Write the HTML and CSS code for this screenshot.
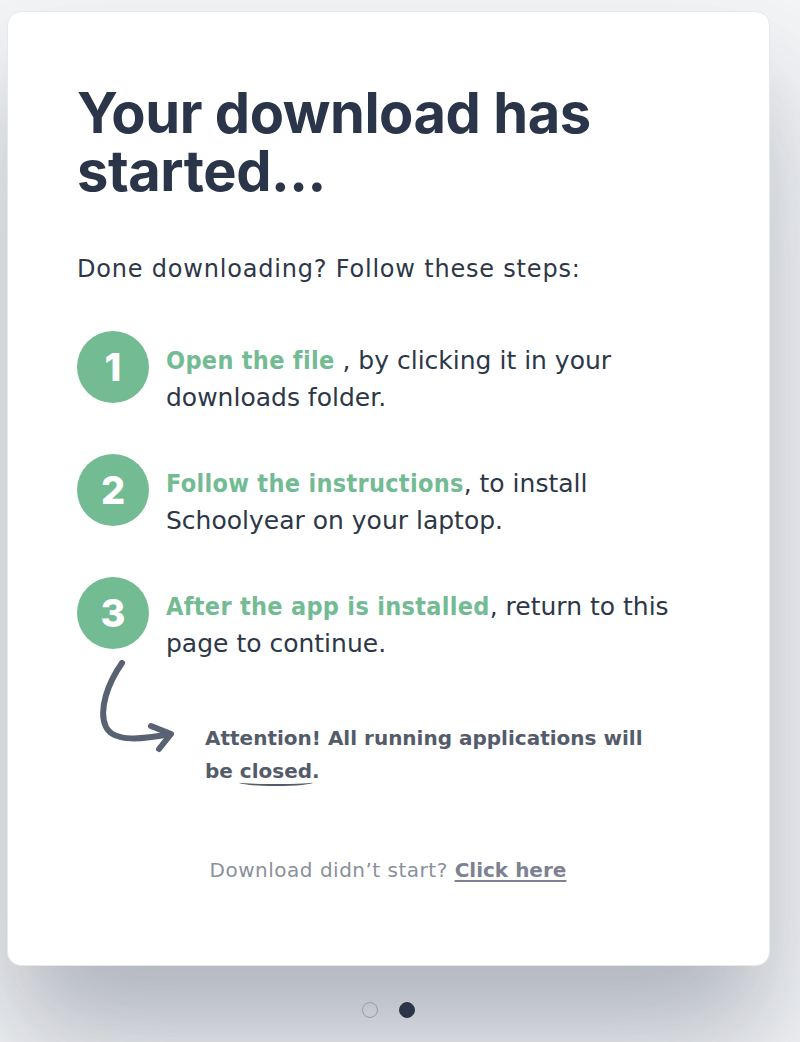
FILE: index.html
```html
<!DOCTYPE html>
<html lang="en">
<head>
<meta charset="utf-8">
<title>Your download has started</title>
<link rel="stylesheet" href="styles.css">
</head>
<body>
<div class="page">
  <main class="card">
    <h1 class="title">Your download has started...</h1>
    <p class="intro">Done downloading? Follow these steps:</p>
    <ol class="steps">
      <li class="step">
        <span class="num">1</span>
        <p class="step-text"><strong class="hl">Open the file</strong> , by clicking it in your downloads folder.</p>
      </li>
      <li class="step">
        <span class="num">2</span>
        <p class="step-text"><strong class="hl">Follow the instructions</strong>, to install Schoolyear on your laptop.</p>
      </li>
      <li class="step">
        <span class="num">3</span>
        <p class="step-text"><strong class="hl">After the app is installed</strong>, return to this page to continue.</p>
      </li>
    </ol>
    <div class="attention">
      <svg class="arrow" width="85" height="95" viewBox="0 0 85 95" aria-hidden="true">
        <path d="M28 3 C 14 23, 4 50, 12 67 C 20 83, 50 79, 76 74" fill="none" stroke="#596273" stroke-width="6" stroke-linecap="round"/>
        <path d="M57 66 L77 74 L65 89" fill="none" stroke="#596273" stroke-width="6" stroke-linecap="round" stroke-linejoin="round"/>
      </svg>
      <p class="attention-text">Attention! All running applications will be <span class="mark">closed</span>.</p>
    </div>
    <p class="retry">Download didn’t start? <a class="retry-link" href="#">Click here</a></p>
  </main>
  <div class="dots">
    <span class="dot"></span>
    <span class="dot active"></span>
  </div>
</div>
</body>
</html>
```
FILE: styles.css
```css
* { box-sizing: border-box; }
html, body { margin: 0; padding: 0; }
body {
  background: #f3f4f6;
  font-family: "DejaVu Sans", "Noto Sans", sans-serif;
  color: #2d3748;
  height: 1042px;
  overflow: hidden;
}
.page {
  padding: 11px 30px 0 7px;
}
.card {
  background: #fff;
  border: 1px solid #e6e8eb;
  border-radius: 14px;
  height: 955px;
  padding: 72px 70px 0 69px;
  box-shadow: 0 60px 90px -10px rgba(50, 60, 80, 0.22),
              0 100px 140px 0 rgba(50, 60, 80, 0.16);
}
.title {
  margin: 0;
  font-family: "Inter", "Noto Sans", sans-serif;
  font-size: 56px;
  line-height: 58px;
  font-weight: 700;
  letter-spacing: -0.45px;
  color: #2b3549;
  max-width: 560px;
}
.intro {
  margin: 54px 0 0;
  font-size: 24px;
  line-height: 30px;
  letter-spacing: 0.8px;
  font-weight: 400;
}
.steps {
  list-style: none;
  margin: 47px 0 0;
  padding: 0;
  display: flex;
  flex-direction: column;
  gap: 38px;
}
.step {
  display: flex;
  align-items: flex-start;
  gap: 17px;
}
.num {
  flex: none;
  width: 72px;
  height: 72px;
  border-radius: 50%;
  background: #73bb93;
  color: #fff;
  font-family: "Inter", sans-serif;
  font-size: 38px;
  font-weight: 800;
  display: flex;
  align-items: center;
  justify-content: center;
}
.step-text {
  margin: 11px 0 0;
  font-size: 25px;
  line-height: 37px;
  max-width: 520px;
}
.hl {
  color: #73bb93;
  font-family: "DejaVu Sans Condensed", "DejaVu Sans", sans-serif;
  font-stretch: condensed;
  font-weight: 700;
  letter-spacing: 0.3px;
}
.attention {
  display: flex;
  align-items: flex-start;
  margin: -2px 0 0 17px;
  gap: 26px;
}
.arrow { flex: none; display: block; }
.attention-text {
  margin: 62px 0 0;
  font-size: 20px;
  line-height: 33px;
  font-weight: 700;
  color: #545c6c;
  max-width: 455px;
}
.mark {
  position: relative;
  display: inline-block;
}
.mark::after {
  content: "";
  position: absolute;
  left: -1px;
  right: -1px;
  bottom: 2px;
  height: 5px;
  border-bottom: 2px solid #545c6c;
  border-radius: 0 0 50% 50%;
}
.retry {
  margin: 68px 0 0;
  text-align: center;
  font-size: 20px;
  line-height: 28px;
  letter-spacing: 0.5px;
  color: #8a909b;
}
.retry-link {
  color: #7c8291;
  font-weight: 700;
  letter-spacing: 0;
  text-decoration: underline;
  text-decoration-thickness: 2px;
  text-underline-offset: 3px;
}
.dots {
  display: flex;
  justify-content: center;
  gap: 21px;
  margin-top: 36px;
}
.dot {
  width: 16px;
  height: 16px;
  border-radius: 50%;
  border: 1px solid #979ba4;
}
.dot.active {
  background: #2b3549;
  border-color: #2b3549;
}
```
